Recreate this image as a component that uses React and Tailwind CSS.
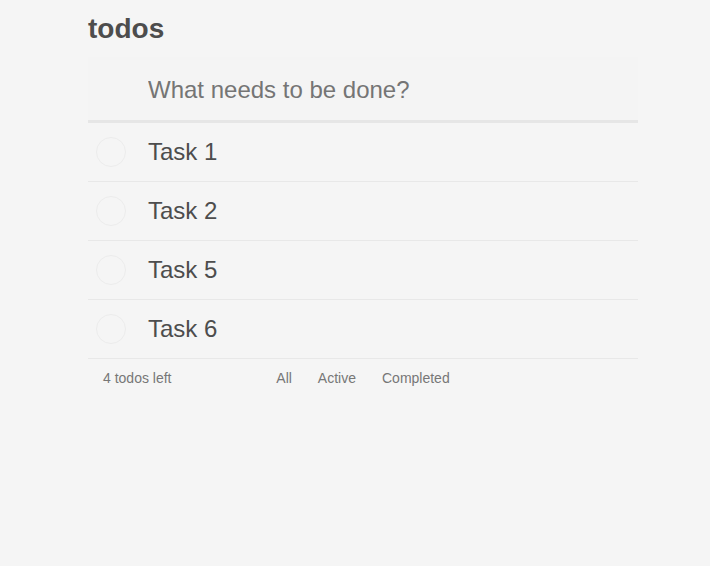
import { useState } from 'react';

const initialTodos = [
    { id: 1, title: 'Task 1', completed: false },
    { id: 2, title: 'Task 2', completed: false },
    { id: 5, title: 'Task 5', completed: false },
    { id: 6, title: 'Task 6', completed: false }
];

export default function App() {
    const [todos, setTodos] = useState(initialTodos);
    const [draft, setDraft] = useState('');
    const [filter, setFilter] = useState('all');

    const left = todos.filter((todo) => !todo.completed).length;
    const visible = todos.filter((todo) =>
        filter === 'active' ? !todo.completed : filter === 'completed' ? todo.completed : true
    );

    const toggle = (id) => {
        setTodos((prev) => prev.map((todo) => (todo.id === id ? { ...todo, completed: !todo.completed } : todo)));
    };

    const handleKeyDown = (e) => {
        if (e.key !== 'Enter' || !draft.trim()) return;
        setTodos((prev) => [...prev, { id: Date.now(), title: draft.trim(), completed: false }]);
        setDraft('');
    };

    return (
        <div className="min-h-screen bg-[#f5f5f5] font-['Liberation_Sans',Arial,sans-serif] text-[#4d4d4d]">
            <div className="w-[550px] ml-[88px]">
                <h1 className="pt-[13px] mb-[12px] text-[28px] leading-[32px] font-bold text-[#4d4d4d]">todos</h1>

                <div className="bg-[#f4f4f4] border-b-[3px] border-[#e6e6e6]">
                    <input
                        value={draft}
                        onChange={(e) => setDraft(e.target.value)}
                        onKeyDown={handleKeyDown}
                        placeholder="What needs to be done?"
                        className="w-full h-[63px] pt-[3px] pl-[60px] pr-4 bg-transparent text-[24px] outline-none placeholder:text-[#757575]"
                    />
                </div>

                <ul>
                    {visible.map((todo) => (
                        <li key={todo.id} className="flex items-center h-[59px] border-b border-[#e8e8e8]">
                            <button
                                type="button"
                                onClick={() => toggle(todo.id)}
                                className="ml-[8px] w-[30px] h-[30px] rounded-full border border-[#ececec] shrink-0"
                            />
                            <span className={`ml-[22px] text-[24px] ${todo.completed ? 'line-through text-[#d9d9d9]' : ''}`}>
                                {todo.title}
                            </span>
                        </li>
                    ))}
                </ul>

                <footer className="grid grid-cols-[1fr_auto_1fr] items-center h-[38px] px-[15px] text-[14px] text-[#777]">
                    <span>{left} todos left</span>
                    <div className="flex gap-[12px]">
                        {['All', 'Active', 'Completed'].map((label) => (
                            <button
                                key={label}
                                type="button"
                                onClick={() => setFilter(label.toLowerCase())}
                                className="px-[7px] py-[3px]"
                            >
                                {label}
                            </button>
                        ))}
                    </div>
                    <span />
                </footer>
            </div>
        </div>
    );
}
